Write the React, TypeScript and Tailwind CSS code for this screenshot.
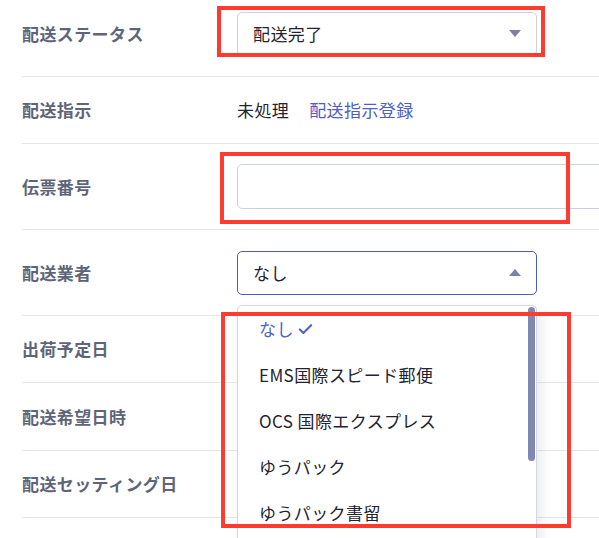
import { Check } from "lucide-react";

const carriers = ["なし", "EMS国際スピード郵便", "OCS 国際エクスプレス", "ゆうパック", "ゆうパック書留"];

const Label = ({ children }: { children: React.ReactNode }) => (
  <div className="w-[215px] shrink-0 text-[17px] font-bold text-[#5f6579]">{children}</div>
);

const Caret = ({ up }: { up?: boolean }) => (
  <svg width="12" height="7" viewBox="0 0 12 7" className="ml-auto">
    {up ? <path d="M0 7 L6 0 L12 7 Z" fill="#7c82a3" /> : <path d="M0 0 L6 7 L12 0 Z" fill="#7c82a3" />}
  </svg>
);

const App = () => {
  return (
    <div
      className="relative h-[538px] overflow-hidden bg-white pl-[22px] tracking-[0.4px] text-[#1f2430]"
      style={{ fontFamily: '"Noto Sans CJK JP", "Noto Sans", sans-serif' }}
    >
      <div className="-mt-[9px]">
        {/* 配送ステータス */}
        <div className="flex h-[86px] items-center border-b border-[#e6e7ee]">
          <Label>配送ステータス</Label>
          <div className="flex h-[44px] w-[300px] items-center rounded-[5px] border border-[#cdd1de] px-[15px] text-[17px]">
            配送完了
            <Caret />
          </div>
        </div>

        {/* 配送指示 */}
        <div className="flex h-[67px] items-center border-b border-[#e6e7ee]">
          <Label>配送指示</Label>
          <span className="text-[17px]">未処理</span>
          <a className="ml-[20px] text-[17px] text-[#4d5ec6]">配送指示登録</a>
        </div>

        {/* 伝票番号 */}
        <div className="flex h-[86px] items-center border-b border-[#e6e7ee]">
          <Label>伝票番号</Label>
          <div className="h-[45px] w-[420px] shrink-0 rounded-[5px] border border-[#cdd1de]" />
        </div>

        {/* 配送業者 */}
        <div className="relative flex h-[86px] items-center border-b border-[#e6e7ee]">
          <Label>配送業者</Label>
          <div className="flex h-[44px] w-[300px] items-center rounded-[5px] border border-[#4f5cc0] px-[15px] text-[17px]">
            なし
            <Caret up />
          </div>
          <div className="absolute left-[215px] top-[75px] z-10 h-[260px] w-[300px] overflow-hidden rounded-t-[5px] border border-[#d3d6e4] bg-white shadow-[4px_6px_12px_rgba(60,70,110,0.12)]">
            <div className="absolute right-[1px] top-[1px] h-[154px] w-[7px] rounded-full bg-[#8188b0]" />
            {carriers.map((c, i) => (
              <div
                key={c}
                className={`flex h-[46px] items-center px-[21px] text-[17px] ${i === 0 ? "text-[#5162c8]" : "text-[#1f2430]"}`}
              >
                {c}
                {i === 0 && <Check className="ml-[3px] h-[17px] w-[17px]" strokeWidth={3} />}
              </div>
            ))}
          </div>
        </div>

        <div className="flex h-[67px] items-center border-b border-[#e6e7ee]">
          <Label>出荷予定日</Label>
        </div>
        <div className="flex h-[68px] items-center border-b border-[#e6e7ee]">
          <Label>配送希望日時</Label>
        </div>
        <div className="flex h-[67px] items-center border-b border-[#e6e7ee]">
          <Label>配送セッティング日</Label>
        </div>
        <div className="flex h-[67px] items-center border-b border-[#e6e7ee]" />
      </div>

      {/* annotation boxes */}
      <div className="pointer-events-none absolute left-[217px] top-[6px] z-20 h-[51px] w-[328px] border-[4px] border-[#ff3b30]" />
      <div className="pointer-events-none absolute left-[220px] top-[152px] z-20 h-[72px] w-[350px] border-[4px] border-[#ff3b30]" />
      <div className="pointer-events-none absolute left-[221px] top-[312px] z-20 h-[216px] w-[350px] border-[4px] border-[#ff3b30]" />
    </div>
  );
};

export default App;
